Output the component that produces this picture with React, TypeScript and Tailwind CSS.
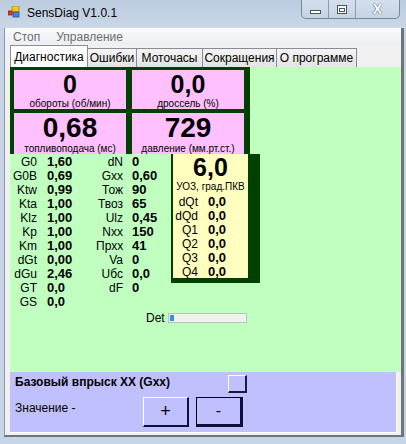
import React from "react";

const col1: [string, string][] = [
  ["G0", "1,60"],
  ["G0B", "0,69"],
  ["Ktw", "0,99"],
  ["Kta", "1,00"],
  ["Klz", "1,00"],
  ["Kp", "1,00"],
  ["Km", "1,00"],
  ["dGt", "0,00"],
  ["dGu", "2,46"],
  ["GT", "0,0"],
  ["GS", "0,0"],
];

const col2: [string, string][] = [
  ["dN", "0"],
  ["Gxx", "0,60"],
  ["Тож", "90"],
  ["Твоз", "65"],
  ["Ulz", "0,45"],
  ["Nxx", "150"],
  ["Прхх", "41"],
  ["Va", "0"],
  ["Uбс", "0,0"],
  ["dF", "0"],
];

const uoz: [string, string][] = [
  ["dQt", "0,0"],
  ["dQd", "0,0"],
  ["Q1", "0,0"],
  ["Q2", "0,0"],
  ["Q3", "0,0"],
  ["Q4", "0,0"],
];

const tabs = ["Ошибки", "Моточасы", "Сокращения", "О программе"];
const tabWidths = ["w-[49px]", "w-[66px]", "w-[74px]", "w-[80px]"];

function VarRow({ label, value, labelW, gap }: { label: string; value: string; labelW: string; gap: string }) {
  return (
    <div className="flex h-[14px] items-center leading-[14px]">
      <span className={`${labelW} text-right text-[12px] text-black`}>{label}</span>
      <span className={`${gap} text-[13px] font-bold text-black`}>{value}</span>
    </div>
  );
}

function BigCell({ value, label, big }: { value: string; label: string; big?: boolean }) {
  return (
    <div className={`bg-[#ffc0ff] flex flex-col items-center ${big ? "h-[41px]" : "h-[39px]"}`}>
      <div className={`font-bold text-black ${big ? "text-[28px] leading-[30px]" : "text-[25px] leading-[28px]"}`}>{value}</div>
      <div className="text-[10px] leading-[11px] text-black">{label}</div>
    </div>
  );
}

export default function App() {
  return (
    <div className="w-[406px] h-[444px] bg-[#c5d4e6] flex flex-col font-['Liberation_Sans',Arial,sans-serif] overflow-hidden">
      {/* title bar */}
      <div className="h-[28px] flex items-start shrink-0 bg-gradient-to-b from-[#bccbde] to-[#c9d7e8]">
        <svg className="ml-[8px] mt-[6px]" width="12" height="12" viewBox="0 0 12 12">
          <rect x="4" y="0" width="7" height="6" fill="#f7c613" stroke="#b28a00" strokeWidth="0.8" />
          <rect x="5" y="6" width="6" height="5" fill="#4b7fd0" stroke="#2a4f8c" strokeWidth="0.8" />
          <rect x="0" y="5" width="4" height="4" fill="#e23a2a" stroke="#9b1d12" strokeWidth="0.8" />
        </svg>
        <span className="ml-[7px] mt-[6px] text-[12px] leading-[14px] text-black">SensDiag V1.0.1</span>
        <div className="ml-auto mr-[6px] flex h-[19px] border border-t-0 border-[#7a8799] rounded-b-[5px] bg-gradient-to-b from-[#d3dfec] to-[#c5d3e4] overflow-hidden">
          <div className="w-[27px] flex items-center justify-center border-r border-[#8e9bab]">
            <div className="w-[11px] h-[4px] bg-white border border-[#4a5461] mt-[5px]" />
          </div>
          <div className="w-[27px] flex items-center justify-center border-r border-[#8e9bab]">
            <div className="w-[10px] h-[9px] bg-white border border-[#4a5461] flex items-center justify-center">
              <div className="w-[6px] h-[4px] border border-[#4a5461] mt-[1px]" />
            </div>
          </div>
          <div className="w-[43px] flex items-center justify-center text-[14px] font-bold text-white [text-shadow:0_0_1px_#3d4753,0_0_1px_#3d4753]">
            X
          </div>
        </div>
      </div>

      {/* client */}
      <div className="ml-[4px] w-[400px] h-[409px] border-l border-[#8e98a4] border-r-[3px] border-r-[#6f747b] border-b-2 border-b-[#6f747b] bg-[#f0f0f0] flex flex-col">
        {/* menu */}
        <div className="h-[16px] flex items-center gap-[16px] pl-[8px] text-[12px] text-[#6d6d6d] bg-gradient-to-b from-[#f8f9fb] to-[#eceff4] border-t border-white">
          <span>Стоп</span>
          <span>Управление</span>
        </div>

        {/* tabs */}
        <div className="h-[23px] flex items-end pl-[5px]">
          <div className="w-[78px] h-[22px] bg-white border border-b-0 border-[#898c95] flex items-center justify-center text-[12px] text-black">
            Диагностика
          </div>
          {tabs.map((t, i) => (
            <div
              key={t}
              className={`${tabWidths[i]} h-[19px] border-t border-r border-[#898c95] bg-gradient-to-b from-[#f4f4f4] to-[#e3e3e3] flex items-center justify-center text-[12px] text-black`}
            >
              {t}
            </div>
          ))}
        </div>

        {/* page */}
        <div className="ml-[5px] h-[305px] bg-[#c0ffc0] flex flex-col">
          <div className="w-[240px] h-[87px] bg-[#004000] grid grid-cols-[112px_112px] gap-x-[6px] gap-y-[3px] pl-[4px] pt-[3px]">
            <BigCell value="0" label="обороты (об/мин)" />
            <BigCell value="0,0" label="дроссель (%)" />
            <BigCell value="0,68" label="топливоподача (мс)" big />
            <BigCell value="729" label="давление (мм.рт.ст.)" big />
          </div>

          <div className="flex">
            <div className="w-[86px] pt-[1px] flex flex-col">
              {col1.map(([l, v]) => (
                <VarRow key={l} label={l} value={v} labelW="w-[27px]" gap="ml-[10px]" />
              ))}
            </div>
            <div className="flex flex-col">
              <div className="flex">
                <div className="w-[75px] pt-[1px] flex flex-col">
                  {col2.map(([l, v]) => (
                    <VarRow key={l} label={l} value={v} labelW="w-[27px]" gap="ml-[9px]" />
                  ))}
                </div>
                <div className="w-[89px] h-[129px] bg-[#004000] pl-[2px] pr-[12px] pb-[5px]">
                  <div className="h-full bg-[#ffffc0] flex flex-col">
                    <div className="-mt-[1px] text-center text-[25px] leading-[28px] font-bold text-black">6,0</div>
                    <div className="text-center text-[10px] leading-[11px] text-black">УОЗ, град.ПКВ</div>
                    <div className="mt-[3px] flex flex-col">
                      {uoz.map(([l, v]) => (
                        <VarRow key={l} label={l} value={v} labelW="w-[25px]" gap="ml-[10px]" />
                      ))}
                    </div>
                  </div>
                </div>
              </div>
              <div className="ml-[50px] mt-[17px] h-[12px] flex items-center">
                <span className="text-[12px] leading-[12px] text-black">Det</span>
                <div className="ml-[3px] w-[79px] h-[10px] border border-[#b9c2b9] bg-[#eef3ee] flex items-center pl-[1px]">
                  <div className="w-[4px] h-[6px] bg-[#3a8ee6]" />
                </div>
              </div>
            </div>
          </div>
        </div>

        {/* bottom panel */}
        <div className="ml-[5px] mr-[4px] h-[61px] bg-[#c0c0ff] border-b border-r border-white flex flex-col pl-[5px]">
          <div className="flex items-start pt-[3px]">
            <span className="w-[213px] mt-[-1px] text-[12px] leading-[16px] font-bold text-black">Базовый впрыск XX (Gxx)</span>
            <div className="w-[19px] h-[18px] border-t border-l border-white border-b-2 border-r-2 border-b-[#1a1a40] border-r-[#1a1a40]" />
          </div>
          <div className="flex items-start mt-[4px]">
            <span className="w-[128px] mt-[3px] text-[12px] leading-[16px] text-black">Значение -</span>
            <div className="w-[46px] h-[30px] border-t border-l border-white border-b-2 border-r-2 border-b-[#10103a] border-r-[#10103a] flex items-center justify-center text-[18px] text-black">
              +
            </div>
            <div className="ml-[7px] w-[47px] h-[30px] border border-black border-b-[3px] border-r-[3px] border-b-[#10103a] border-r-[#10103a] flex items-center justify-center text-[16px] text-black">
              -
            </div>
          </div>
        </div>
      </div>
    </div>
  );
}
